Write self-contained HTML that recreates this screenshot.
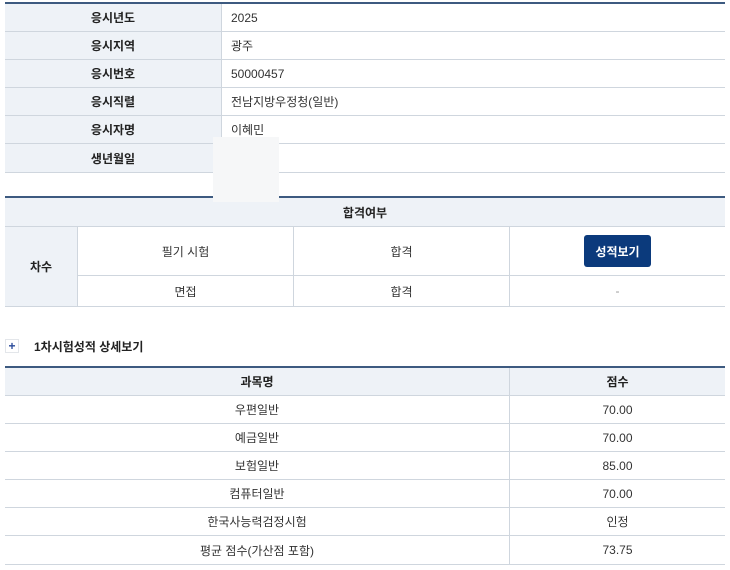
<!DOCTYPE html>
<html><head><meta charset="utf-8"><style>
*{margin:0;padding:0;box-sizing:border-box}
body{width:730px;height:570px;background:#fff;font-family:"Liberation Sans","Noto Sans CJK KR",sans-serif;font-size:12px;color:#333;position:relative;overflow:hidden}
.a{position:absolute}
.c{position:absolute;display:flex;align-items:center;justify-content:center;border-bottom:1px solid #cfd6de}
.l{position:absolute;display:flex;align-items:center;padding-left:9px;border-bottom:1px solid #cfd6de}
.h{background:#eef2f7;font-weight:bold;color:#222}
.vr{border-right:1px solid #cfd6de}
.top{position:absolute;left:5px;width:720px;height:2px;background:#3d5a80}
</style></head><body>
<div class="top" style="top:2px"></div>
<div class="c h vr" style="left:5px;top:4px;width:217px;height:28px">응시년도</div><div class="l" style="left:222px;top:4px;width:503px;height:28px">2025</div>
<div class="c h vr" style="left:5px;top:32px;width:217px;height:28px">응시지역</div><div class="l" style="left:222px;top:32px;width:503px;height:28px">광주</div>
<div class="c h vr" style="left:5px;top:60px;width:217px;height:28px">응시번호</div><div class="l" style="left:222px;top:60px;width:503px;height:28px">50000457</div>
<div class="c h vr" style="left:5px;top:88px;width:217px;height:28px">응시직렬</div><div class="l" style="left:222px;top:88px;width:503px;height:28px">전남지방우정청(일반)</div>
<div class="c h vr" style="left:5px;top:116px;width:217px;height:28px">응시자명</div><div class="l" style="left:222px;top:116px;width:503px;height:28px">이혜민</div>
<div class="c h vr" style="left:5px;top:144px;width:217px;height:29px">생년월일</div><div class="l" style="left:222px;top:144px;width:503px;height:29px"></div>
<div class="top" style="top:196px"></div>
<div class="c h" style="left:5px;top:198px;width:720px;height:29px">합격여부</div>
<div class="a" style="left:213px;top:137px;width:66px;height:65px;background:#f6f7f8;z-index:5"></div>
<div class="c h vr" style="left:5px;top:227px;width:73px;height:80px">차수</div>
<div class="c vr" style="left:78px;top:227px;width:216px;height:49px">필기 시험</div>
<div class="c vr" style="left:294px;top:227px;width:216px;height:49px">합격</div>
<div class="c" style="left:510px;top:227px;width:215px;height:49px"><div style="background:#0b3a7c;color:#fff;width:67px;height:32px;border-radius:3px;display:flex;align-items:center;justify-content:center;font-weight:bold">성적보기</div></div>
<div class="c vr" style="left:78px;top:276px;width:216px;height:31px">면접</div>
<div class="c vr" style="left:294px;top:276px;width:216px;height:31px">합격</div>
<div class="c" style="left:510px;top:276px;width:215px;height:31px;color:#999">-</div>
<div class="a" style="left:5px;top:339px;width:14px;height:14px;border:1px solid #e3e6ea;color:#2a4a9a;font-weight:bold;font-size:12px;line-height:12px;text-align:center">+</div>
<div class="a" style="left:34px;top:338px;font-weight:bold;font-size:12px;color:#222">1차시험성적 상세보기</div>
<div class="top" style="top:366px"></div>
<div class="c h vr" style="left:5px;top:368px;width:505px;height:28px">과목명</div><div class="c h" style="left:510px;top:368px;width:215px;height:28px">점수</div>
<div class="c vr" style="left:5px;top:396px;width:505px;height:28px">우편일반</div><div class="c" style="left:510px;top:396px;width:215px;height:28px">70.00</div>
<div class="c vr" style="left:5px;top:424px;width:505px;height:28px">예금일반</div><div class="c" style="left:510px;top:424px;width:215px;height:28px">70.00</div>
<div class="c vr" style="left:5px;top:452px;width:505px;height:28px">보험일반</div><div class="c" style="left:510px;top:452px;width:215px;height:28px">85.00</div>
<div class="c vr" style="left:5px;top:480px;width:505px;height:28px">컴퓨터일반</div><div class="c" style="left:510px;top:480px;width:215px;height:28px">70.00</div>
<div class="c vr" style="left:5px;top:508px;width:505px;height:28px">한국사능력검정시험</div><div class="c" style="left:510px;top:508px;width:215px;height:28px">인정</div>
<div class="c vr" style="left:5px;top:536px;width:505px;height:29px">평균 점수(가산점 포함)</div><div class="c" style="left:510px;top:536px;width:215px;height:29px">73.75</div>
</body></html>
